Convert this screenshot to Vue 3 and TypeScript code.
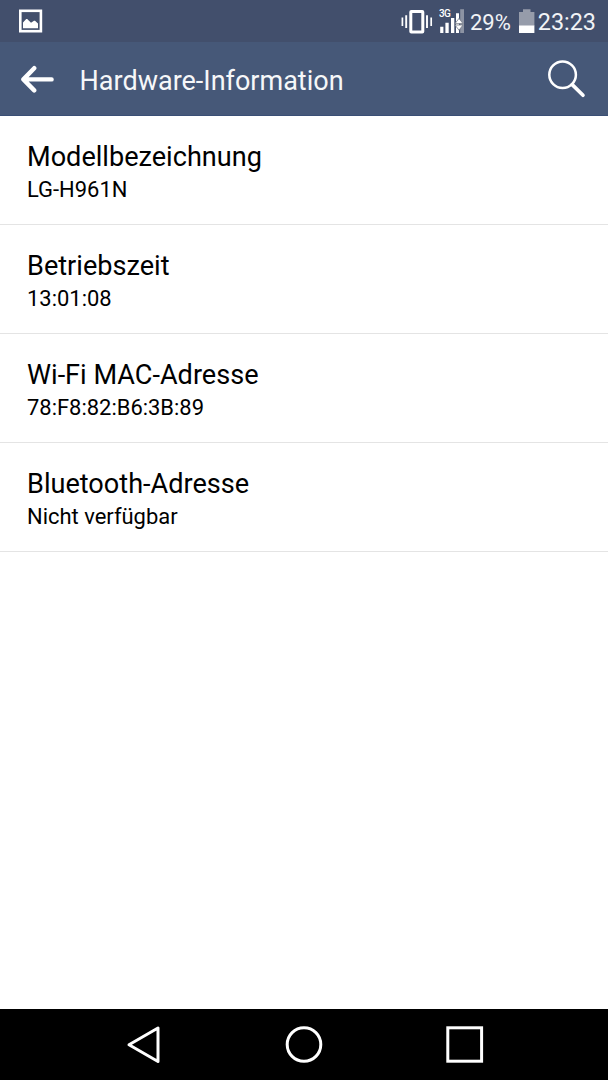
<script setup lang="ts">
interface InfoRow {
  title: string
  value: string
}

const rows: InfoRow[] = [
  { title: 'Modellbezeichnung', value: 'LG-H961N' },
  { title: 'Betriebszeit', value: '13:01:08' },
  { title: 'Wi-Fi MAC-Adresse', value: '78:F8:82:B6:3B:89' },
  { title: 'Bluetooth-Adresse', value: 'Nicht verfügbar' },
]
</script>

<template>
  <div class="screen">
    <div class="status">
      <svg class="picture" width="24" height="24" viewBox="0 0 24 24">
        <rect x="1.3" y="1.8" width="20.6" height="20.4" fill="none" stroke="#fff" stroke-width="2.6" />
        <path d="M4 19.2v-5.7l3.2-3.5h1l3.8 3.8 3-2h1l3 2.6v4.8z" fill="#fff" />
      </svg>
      <div class="indicators">
        <svg class="vibrate" width="32" height="26" viewBox="0 0 32 26" fill="none" stroke="#fff">
          <rect x="9.8" y="2.5" width="12" height="20.4" rx=".5" stroke-width="3" />
          <path d="M5.2 6.3v12.6M26 6.3v12.6" stroke-width="1.9" />
          <path d="M1.4 8.5v8.6M30.2 8.5v8.6" stroke-width="1.7" />
        </svg>
        <div class="signal">
          <span class="network">3G</span>
          <svg width="26" height="26" viewBox="0 0 26 26">
            <path d="M1.2 18.8h3.2V25H1.2zM6.4 14.8h3.3V25H6.4zM12 10h3.3v15H12zM17 5.2h3V25h-3z" fill="#fff" />
            <path d="M21.2 1.2h3.8V25h-3.8z" fill="#8c93a3" />
            <path d="M20 10.4l4 5.2h-8zM20 22.2l4-5.2h-8z" fill="#fff" stroke="#777d89" stroke-width=".8" />
          </svg>
        </div>
        <span class="percent">29%</span>
        <svg class="battery" width="16" height="25" viewBox="0 0 16 25">
          <path d="M0 3h4V.2h7.5V3H15.4v14H0z" fill="#969caa" />
          <path d="M0 16.5h15.4V24H0z" fill="#fff" />
        </svg>
        <span class="clock">23:23</span>
      </div>
    </div>

    <header class="bar">
      <svg class="back" width="34" height="28" viewBox="0 0 34 28" fill="none" stroke="#fff" stroke-width="4.4" stroke-linecap="round" stroke-linejoin="round">
        <path d="M14.2 3.2L3.4 14.4l10.8 11M3.8 14.4h27.8" />
      </svg>
      <h1>Hardware-Information</h1>
      <svg class="search" width="38" height="38" viewBox="0 0 38 38" fill="none" stroke="#fff">
        <circle cx="14.6" cy="14.8" r="13.3" stroke-width="2.5" />
        <path d="M24.2 24.6L35 35.3" stroke-width="3.6" stroke-linecap="round" />
      </svg>
    </header>

    <main>
      <section v-for="row in rows" :key="row.title" class="row">
        <h2>{{ row.title }}</h2>
        <p>{{ row.value }}</p>
      </section>
    </main>

    <nav class="nav">
      <svg width="608" height="71" viewBox="0 0 608 71" fill="none" stroke="#fff" stroke-width="3">
        <path d="M158 19v33.5L129 35.7z" stroke-linejoin="round" />
        <circle cx="304" cy="35.5" r="16.8" />
        <rect x="447.8" y="18.8" width="33.8" height="33.4" />
      </svg>
    </nav>
  </div>
</template>

<style>
body {
  margin: 0;
}
</style>

<style scoped>
.screen {
  width: 608px;
  height: 1080px;
  display: flex;
  flex-direction: column;
  overflow: hidden;
  background: #fff;
  color: #000;
  font-family: Roboto, sans-serif;
}
svg {
  display: block;
  flex: none;
}
h1,
h2,
p {
  margin: 0;
  font-weight: 400;
  white-space: nowrap;
}
.status {
  height: 42px;
  box-sizing: border-box;
  padding: 0 12px 0 19px;
  display: flex;
  align-items: center;
  justify-content: space-between;
  background: #424f6c;
  color: #f1f3f6;
}
.indicators {
  display: flex;
  align-items: center;
}
.signal {
  position: relative;
  margin-left: 6px;
}
.network {
  position: absolute;
  left: 0;
  top: 1px;
  font-size: 10px;
  line-height: 10px;
  font-weight: 500;
  letter-spacing: -0.5px;
  color: #fff;
}
.percent {
  margin: 3px 0 0 5px;
  font-size: 22px;
  line-height: 26px;
}
.battery {
  margin: 0 3px 0 8px;
}
.clock {
  margin-top: 2px;
  font-size: 23.4px;
  line-height: 26px;
}
.vibrate {
  margin-top: 1px;
}
.bar {
  height: 74px;
  box-sizing: border-box;
  padding: 0 22px 0 20px;
  display: flex;
  align-items: center;
  background: #465878;
  border-bottom: 1px solid #3a4f75;
  color: #f6f7f9;
}
.back {
  margin-right: 25.6px;
}
h1 {
  flex: 1;
  margin-top: 5px;
  font-size: 27px;
  line-height: 32px;
}
main {
  flex: 1;
}
.row {
  height: 109px;
  box-sizing: border-box;
  padding: 25px 27px 0;
  border-bottom: 1px solid #e4e4e4;
}
h2 {
  font-size: 27.1px;
  line-height: 32px;
}
p {
  margin-top: 4px;
  font-size: 21.95px;
  line-height: 26px;
}
.nav {
  height: 71px;
  background: #000;
}
</style>
